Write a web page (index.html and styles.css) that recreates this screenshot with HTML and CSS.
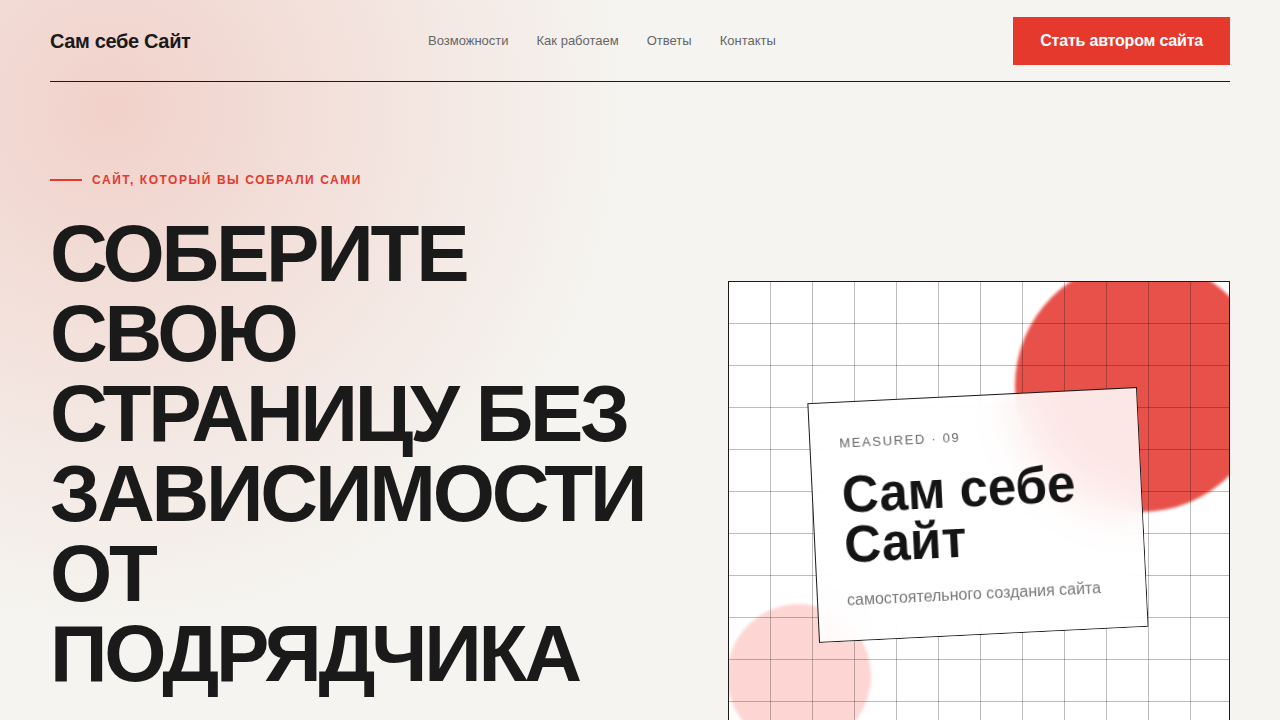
FILE: index.html
```html
<!DOCTYPE html>
<html lang="ru">
<head>
<meta charset="utf-8">
<title>Сам себе Сайт</title>
<link rel="stylesheet" href="styles.css">
</head>
<body>
<div class="page">
  <header class="header">
    <div class="logo">Сам себе Сайт</div>
    <nav class="nav">
      <a href="#">Возможности</a>
      <a href="#">Как работаем</a>
      <a href="#">Ответы</a>
      <a href="#">Контакты</a>
    </nav>
    <a class="cta" href="#">Стать автором сайта</a>
  </header>
  <main class="hero">
    <div class="hero-text">
      <div class="eyebrow"><span class="eyebrow-line"></span>САЙТ, КОТОРЫЙ ВЫ СОБРАЛИ САМИ</div>
      <h1 class="title">СОБЕРИТЕ СВОЮ СТРАНИЦУ БЕЗ ЗАВИСИМОСТИ ОТ ПОДРЯДЧИКА</h1>
    </div>
    <div class="visual">
      <div class="circle circle-red"></div>
      <div class="circle circle-pink"></div>
      <div class="grid"></div>
      <div class="card">
        <div class="card-label">MEASURED · 09</div>
        <div class="card-title">Сам себе<br>Сайт</div>
        <div class="card-sub">самостоятельного создания сайта</div>
      </div>
    </div>
  </main>
</div>
</body>
</html>
```
FILE: styles.css
```css
* { box-sizing: border-box; }
html, body { margin: 0; padding: 0; }
body {
  font-family: "Liberation Sans", Arial, sans-serif;
  color: #1a1a1a;
  background-color: #f5f4f0;
  background-image:
    radial-gradient(circle at 110px 110px, rgba(236, 160, 150, 0.42) 0, rgba(236, 160, 150, 0.25) 200px, rgba(236, 160, 150, 0) 520px);
  height: 720px;
  overflow: hidden;
}
.page { padding: 0 50px; }
.header {
  display: flex;
  align-items: center;
  justify-content: space-between;
  padding: 17px 0 16px;
  border-bottom: 1px solid #1a1a1a;
}
.logo {
  font-size: 20px;
  font-weight: 700;
  letter-spacing: -0.35px;
  color: #1a1a1a;
}
.nav { display: flex; gap: 28px; margin-top: -1px; }
.nav a {
  font-size: 13px;
  color: #666;
  text-decoration: none;
}
.cta {
  display: inline-flex;
  align-items: center;
  height: 48px;
  padding: 0 27px;
  background: #e5392d;
  color: #fff;
  font-size: 16px;
  font-weight: 700;
  text-decoration: none;
  letter-spacing: -0.2px;
}
.hero {
  display: grid;
  grid-template-columns: 1fr 502px;
  gap: 76px;
  padding-top: 91px;
}
.eyebrow {
  display: flex;
  align-items: center;
  gap: 10px;
  font-size: 12px;
  font-weight: 700;
  letter-spacing: 1.55px;
  color: #e5392d;
  line-height: 14px;
}
.eyebrow-line {
  width: 32px;
  height: 2px;
  background: #e5392d;
}
.title {
  margin: 27px 0 0;
  font-size: 80px;
  line-height: 80px;
  font-weight: 700;
  letter-spacing: -3.2px;
  color: #1a1a1a;
}
.visual {
  position: relative;
  margin-top: 108px;
  height: 560px;
  border: 1px solid #1a1a1a;
  background: #fff;
  overflow: hidden;
}
.circle { position: absolute; border-radius: 50%; }
.circle-red {
  width: 252px;
  height: 252px;
  left: 286px;
  top: -22px;
  background: #e8514a;
  filter: blur(1.5px);
}
.circle-pink {
  width: 144px;
  height: 144px;
  left: -2px;
  top: 322px;
  background: #fdd6d4;
  filter: blur(1.5px);
}
.grid {
  position: absolute;
  inset: 0;
  background-image:
    linear-gradient(to right, rgba(0,0,0,0.26) 1px, transparent 1px),
    linear-gradient(to bottom, rgba(0,0,0,0.26) 1px, transparent 1px);
  background-size: 42px 42px;
  background-position: 41px 41px;
}
.card {
  position: absolute;
  left: 84px;
  top: 113px;
  width: 330px;
  height: 240px;
  padding: 33px 30px 0 29px;
  background: rgba(255, 255, 255, 0.86);
  backdrop-filter: blur(24px);
  -webkit-backdrop-filter: blur(24px);
  border: 1px solid #1a1a1a;
  transform: rotate(-2.8deg);
}
.card-label {
  font-size: 13px;
  line-height: 15px;
  letter-spacing: 1.65px;
  color: #666;
}
.card-title {
  margin-top: 20px;
  font-size: 51px;
  line-height: 50px;
  font-weight: 700;
  color: #141414;
}
.card-sub {
  margin-top: 21px;
  font-size: 16px;
  line-height: 18px;
  color: #777;
}
```
